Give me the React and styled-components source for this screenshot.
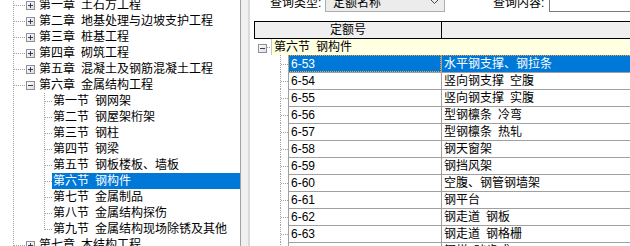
import React from "react";
import styled, { createGlobalStyle, css } from "styled-components";

const GlobalStyle = createGlobalStyle`
  html, body {
    margin: 0;
    padding: 0;
    background: #fff;
    overflow: hidden;
  }
  body {
    font: 12px "Liberation Sans", "Noto Sans CJK SC", sans-serif;
    color: #000;
  }
`;

const DOT = "#a0a0a0";
const vline = (x, h = "100%") =>
  `repeating-linear-gradient(to bottom, ${DOT} 0 1px, transparent 1px 2px) ${x}px 0 / 1px ${h} no-repeat`;
const hline = (x, y) =>
  `repeating-linear-gradient(to right, ${DOT} 0 1px, transparent 1px 2px) ${x}px ${y}px / 100% 1px no-repeat`;

const Frame = styled.div`
  display: flex;
  width: 630px;
  height: 246px;
  overflow: hidden;
`;

/* ---------- left tree ---------- */
const TreePanel = styled.div`
  flex: none;
  width: 240px;
  border-right: 1px solid #a0a0a0;
  overflow: hidden;
  background: #fff;
`;

const TreeList = styled.div`
  margin-top: -3px;
`;

const TreeRow = styled.div`
  display: flex;
  height: 16px;
  line-height: 16px;
  white-space: nowrap;
`;

const Indent = styled.span`
  flex: none;
  width: 13px;
`;

const Guide = styled.span`
  flex: none;
  width: ${(p) => p.$w}px;
  height: 16px;
  background: ${(p) =>
    [
      p.$branch && hline(1, 8),
      p.$line === "full" && vline(0),
      p.$line === "half" && vline(0, "9px"),
    ]
      .filter(Boolean)
      .join(", ") || "none"};
`;

const ToggleBox = styled.svg`
  flex: none;
  width: 9px;
  height: 9px;
  margin-top: ${(p) => p.$top ?? 4}px;
`;

const ChapterLabel = styled.span`
  padding-left: 4px;
`;

const SectionLabel = styled.span`
  flex: 1;
  padding-left: 1px;
  ${(p) =>
    p.$selected &&
    css`
      background: #0078d7;
      color: #fff;
    `}
`;

const Toggle = ({ open, top }) => (
  <ToggleBox viewBox="0 0 9 9" $top={top}>
    <defs>
      <linearGradient id="tg" x1="0" y1="0" x2="1" y2="1">
        <stop offset="0" stopColor="#ffffff" />
        <stop offset="1" stopColor="#dcdcdc" />
      </linearGradient>
    </defs>
    <rect x="0.5" y="0.5" width="8" height="8" fill="url(#tg)" stroke="#8f8f8f" />
    <path d="M2 4.5h5" stroke="#2b3f6c" />
    {!open && <path d="M4.5 2v5" stroke="#2b3f6c" />}
  </ToggleBox>
);

const chapters = [
  ["第一章", "土石方工程"],
  ["第二章", "地基处理与边坡支护工程"],
  ["第三章", "桩基工程"],
  ["第四章", "砌筑工程"],
  ["第五章", "混凝土及钢筋混凝土工程"],
];

const sections = [
  ["第一节", "钢网架"],
  ["第二节", "钢屋架桁架"],
  ["第三节", "钢柱"],
  ["第四节", "钢梁"],
  ["第五节", "钢板楼板、墙板"],
  ["第六节", "钢构件"],
  ["第七节", "金属制品"],
  ["第八节", "金属结构探伤"],
  ["第九节", "金属结构现场除锈及其他"],
];

const SP = "\u2002";

const ChapterRow = ({ no, name, open }) => (
  <TreeRow>
    <Indent />
    <Guide $w={13} $line="full" $branch />
    <Toggle open={open} />
    <ChapterLabel>
      {no}
      {SP}
      {name}
    </ChapterLabel>
  </TreeRow>
);

/* ---------- splitter ---------- */
const Splitter = styled.div`
  flex: none;
  width: 7px;
  background: #f0f0f0;
  border-right: 2px solid #dadada;
`;

/* ---------- right side ---------- */
const Main = styled.div`
  flex: 1;
  min-width: 0;
  display: flex;
  flex-direction: column;
  overflow: hidden;
`;

const Toolbar = styled.div`
  flex: none;
  display: flex;
  align-items: center;
  height: 21px;
  margin-top: -9px;
  padding-left: 20px;
`;

const FieldLabel = styled.span`
  flex: none;
  width: ${(p) => p.$w}px;
  margin-left: ${(p) => p.$ml || 0}px;
  white-space: nowrap;
`;

const Select = styled.div`
  flex: none;
  box-sizing: border-box;
  display: flex;
  align-items: center;
  justify-content: space-between;
  width: 120px;
  height: 21px;
  padding: 0 5px 0 7px;
  background: #ececec;
  border: 1px solid #adadad;
`;

const TextBox = styled.div`
  flex: 1;
  height: 21px;
  box-sizing: border-box;
  margin-right: -10px;
  background: #fff;
  border: 1px solid #7a7a7a;
`;

const Grid = styled.div`
  margin: 9px -20px 0 4px;
`;

const HeadRow = styled.div`
  display: grid;
  grid-template-columns: 186px 1fr;
  box-sizing: border-box;
  height: 18px;
  background: #efefef;
  border: 1px solid #000;
  border-right: none;
`;

const HeadCell = styled.div`
  line-height: 16px;
  text-align: center;
  & + & {
    border-left: 1px solid #000;
  }
`;

const GroupRow = styled.div`
  display: flex;
  height: 16px;
  line-height: 16px;
`;

const GroupGutter = styled.div`
  flex: none;
  display: flex;
  width: 17px;
  padding-left: 4px;
  box-sizing: border-box;
  background: ${hline(13, 8)};
`;

const GroupCell = styled.div`
  flex: 1;
  padding-left: 2px;
  background: #ffffe1;
  border-left: 1px solid #c8c8c8;
  white-space: nowrap;
`;

const DataRow = styled.div`
  display: flex;
  height: 17px;
  line-height: 16px;
  white-space: nowrap;
`;

const DataGutter = styled.div`
  flex: none;
  width: 34px;
  background: ${hline(27, 9)}, ${vline(26)};
`;

const Cell = styled.div`
  box-sizing: border-box;
  padding-left: 2px;
  border-top: 1px solid #a0a0a0;
  border-left: 1px solid #a0a0a0;
  ${(p) => (p.$wide ? "flex: 1;" : "flex: none; width: 153px;")}
  ${(p) =>
    p.$selected &&
    css`
      background: #0078d7;
      color: #fff;
      border-top: 1px dotted #f0a23c;
    `}
  ${(p) =>
    p.$selected &&
    !p.$wide &&
    css`
      outline: 1px dotted #f0a23c;
      outline-offset: -1px;
    `}
`;

const quotas = [
  ["6-53", "水平钢支撑、钢拉条"],
  ["6-54", `竖向钢支撑${SP}空腹`],
  ["6-55", `竖向钢支撑${SP}实腹`],
  ["6-56", `型钢檩条${SP}冷弯`],
  ["6-57", `型钢檩条${SP}热轧`],
  ["6-58", "钢天窗架"],
  ["6-59", "钢挡风架"],
  ["6-60", "空腹、钢管钢墙架"],
  ["6-61", "钢平台"],
  ["6-62", `钢走道${SP}钢板`],
  ["6-63", `钢走道${SP}钢格栅`],
  ["6-64", `钢梯${SP}踏步式`],
];

const Chevron = () => (
  <svg width="9" height="5" viewBox="0 0 9 5">
    <path d="M0.5 0.5l4 4 4-4" fill="none" stroke="#444" />
  </svg>
);

export default function App() {
  return (
    <>
      <GlobalStyle />
      <Frame>
        <TreePanel>
          <TreeList>
            {chapters.map(([no, name]) => (
              <ChapterRow key={no} no={no} name={name} />
            ))}
            <ChapterRow no="第六章" name="金属结构工程" open />
            {sections.map(([no, name], i) => (
              <TreeRow key={no}>
                <Indent />
                <Guide $w={31} $line="full" />
                <Guide
                  $w={8}
                  $line={i === sections.length - 1 ? "half" : "full"}
                  $branch
                />
                <SectionLabel $selected={no === "第六节"}>
                  {no}
                  {SP}
                  {name}
                </SectionLabel>
              </TreeRow>
            ))}
            <ChapterRow no="第七章" name="木结构工程" />
          </TreeList>
        </TreePanel>
        <Splitter />
        <Main>
          <Toolbar>
            <FieldLabel $w={55}>查询类型:</FieldLabel>
            <Select>
              <span>定额名称</span>
              <Chevron />
            </Select>
            <FieldLabel $w={56} $ml={48}>
              查询内容:
            </FieldLabel>
            <TextBox />
          </Toolbar>
          <Grid>
            <HeadRow>
              <HeadCell>定额号</HeadCell>
              <HeadCell />
            </HeadRow>
            <GroupRow>
              <GroupGutter>
                <Toggle open top={5} />
              </GroupGutter>
              <GroupCell>
                第六节{SP}钢构件
              </GroupCell>
            </GroupRow>
            {quotas.map(([code, name], i) => (
              <DataRow key={code}>
                <DataGutter />
                <Cell $selected={i === 0}>{code}</Cell>
                <Cell $wide $selected={i === 0}>
                  {name}
                </Cell>
              </DataRow>
            ))}
          </Grid>
        </Main>
      </Frame>
    </>
  );
}
